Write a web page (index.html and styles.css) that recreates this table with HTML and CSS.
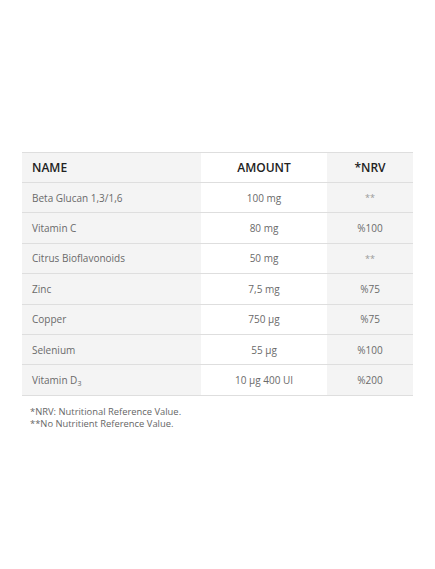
FILE: index.html
```html
<!DOCTYPE html>
<html>
<head>
<meta charset="utf-8">
<link rel="stylesheet" href="styles.css">
</head>
<body>
<div class="wrap">
  <table class="nt">
    <colgroup>
      <col class="c1"><col class="c2"><col class="c3">
    </colgroup>
    <thead>
      <tr><th class="name">NAME</th><th>AMOUNT</th><th class="nrv">*NRV</th></tr>
    </thead>
    <tbody>
      <tr><td class="name">Beta Glucan 1,3/1,6</td><td>100 mg</td><td class="nrv star">**</td></tr>
      <tr><td class="name">Vitamin C</td><td>80 mg</td><td class="nrv">%100</td></tr>
      <tr><td class="name">Citrus Bioflavonoids</td><td>50 mg</td><td class="nrv star">**</td></tr>
      <tr><td class="name">Zinc</td><td>7,5 mg</td><td class="nrv">%75</td></tr>
      <tr><td class="name">Copper</td><td>750 µg</td><td class="nrv">%75</td></tr>
      <tr><td class="name">Selenium</td><td>55 µg</td><td class="nrv">%100</td></tr>
      <tr><td class="name">Vitamin D<sub>3</sub></td><td>10 µg 400 UI</td><td class="nrv">%200</td></tr>
    </tbody>
  </table>
  <p class="note">*NRV: Nutritional Reference Value.<br>**No Nutritient Reference Value.</p>
</div>
</body>
</html>
```
FILE: styles.css
```css
html, body { margin: 0; padding: 0; background: #fff; }
body { font-family: "Open Sans", "DejaVu Sans", sans-serif; }
.wrap { padding: 152px 22px 0 22px; }
.nt { width: 391px; border-collapse: collapse; table-layout: fixed; }
.c1 { width: 179px; }
.c2 { width: 126px; }
.c3 { width: 86px; }
.nt th, .nt td {
  padding: 0; border-top: 1px solid #dedede; border-bottom: 1px solid #dedede;
  text-align: center; vertical-align: middle;
}
.nt th { height: 29px; font-size: 12px; font-weight: 600; color: #222; }
.nt td { height: 29.4px; font-size: 10px; color: #6a6a6a; }
.nt .name { text-align: left; padding-left: 10px; background: #f4f4f4; }
.nt .nrv { background: #f4f4f4; }
.nt th.name { font-size: 12px; }
.nt td.star { color: #999; font-size: 9px; }
sub { font-size: 7px; vertical-align: -2px; line-height: 0; }
.note { margin: 10px 0 0 8px; font-size: 9.4px; line-height: 12px; color: #666; }
```
